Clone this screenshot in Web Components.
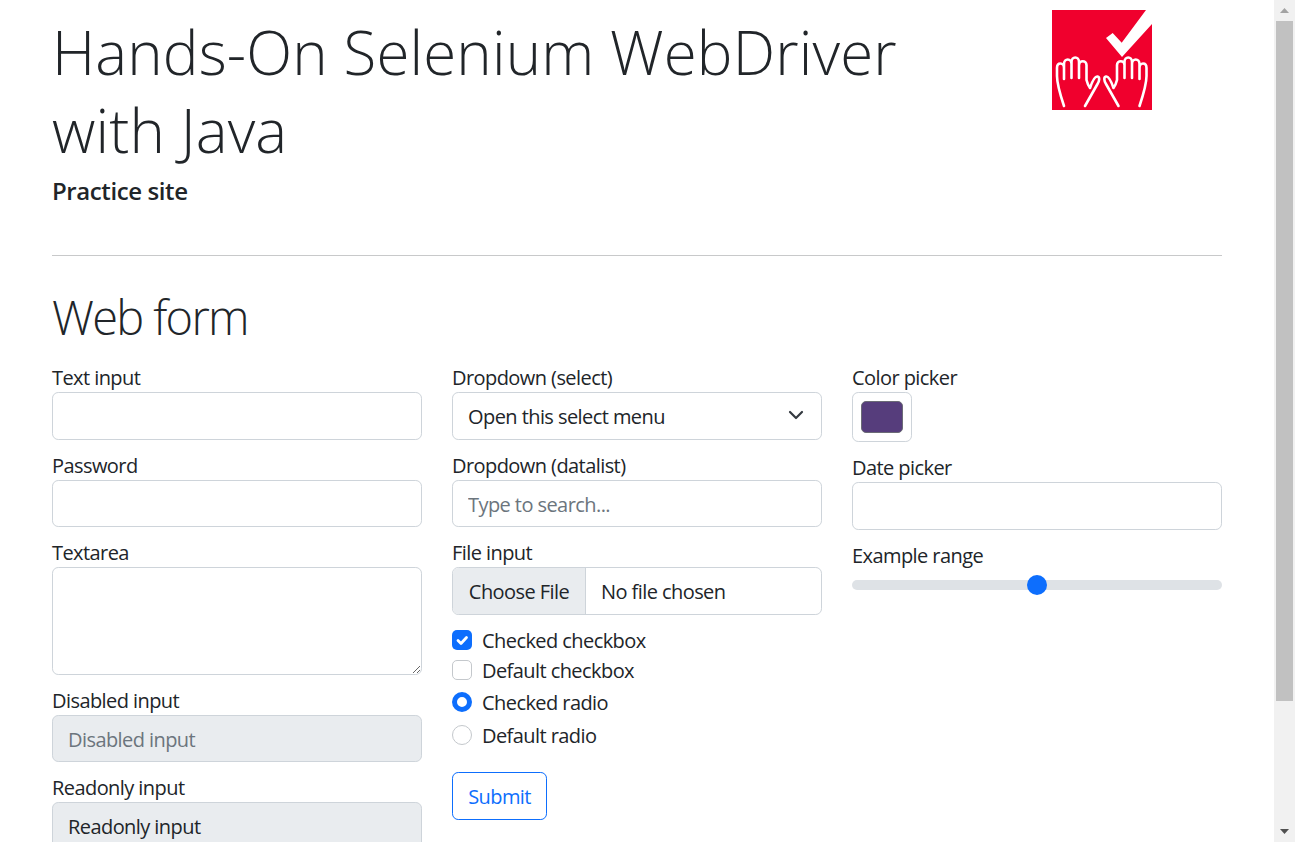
<!DOCTYPE html>
<html lang="en"><head><meta charset="utf-8"><title>Hands-On Selenium WebDriver with Java</title>
<style>
html,body{margin:0;height:100%;overflow:hidden;background:#fff}
body{font-family:"Open Sans","Noto Sans",sans-serif;color:#212529}
</style></head><body>
<app-shell>
  <site-header title-text="Hands-On Selenium WebDriver with Java" subtitle="Practice site"></site-header>
  <web-form></web-form>
</app-shell>
<script>
const FONT='"Open Sans","Noto Sans",sans-serif';
const LS='-.57px';
function def(name,html,cb){
  customElements.define(name,class extends HTMLElement{
    connectedCallback(){
      if(this.shadowRoot)return;
      const r=this.attachShadow({mode:'open'});
      r.innerHTML=typeof html==='function'?html(this):html;
      if(cb)cb(r,this);
    }
  });
}
const ctl=`box-sizing:border-box;display:block;width:100%;height:47.5px;border:1.25px solid #ced4da;border-radius:6.25px;padding:9.25px 15px 8.25px;font:20px/27.5px ${FONT};letter-spacing:${LS};color:#212529;background:#fff;outline:0;margin:0;`;

def('app-shell',`<style>
:host{display:flex;height:100vh;overflow:hidden}
main{flex:1;min-width:0;padding:0 52px;box-sizing:border-box}
</style><main><slot></slot></main><page-scrollbar></page-scrollbar>`);

def('page-scrollbar',`<style>
:host{display:flex;flex-direction:column;align-items:center;width:21px;flex:none;background:#f1f1f1;height:100vh}
.btn{height:21px;flex:none;display:flex;align-items:center;justify-content:center}
.track{flex:1;width:100%;box-sizing:border-box;padding:0 2px 0 2px}
.thumb{height:680px;background:#c1c1c1}
svg{display:block}
</style>
<div class="btn"><svg width="9" height="5" viewBox="0 0 9 5"><path d="M4.5 0 9 5H0z" fill="#a3a3a3"/></svg></div>
<div class="track"><div class="thumb"></div></div>
<div class="btn"><svg width="9" height="5" viewBox="0 0 9 5"><path d="M0 0h9L4.5 5z" fill="#505050"/></svg></div>`);

def('site-logo',`<style>:host{display:block;width:100px;height:100px}svg{display:block}</style>
<svg width="100" height="100" viewBox="0 0 100 100" role="img" aria-label="Logo">
<path d="M0 0H94L100 14V100H0z" fill="#f0002d"/>
<path d="M54 28 60.700 23 69.700 32.700 94 0H100V14L70 47z" fill="#fff"/>
<g id="h" fill="none" stroke="#fff" stroke-width="2.6" stroke-linecap="round" stroke-linejoin="round">
<path d="M12 96C8 84 5 75 5 66V58C5 52 12 52 12 58V69M12 58V54C12 48 19.500 48 19.500 54V68M19.500 54V52C19.500 46 27 46 27 52V68M27 55C27 50 34.500 50 34.500 55V70C35.500 74 36.500 76 38 78C40 72 43 66 45.500 66.500C48 67 47.500 71 45.500 74C41 82 37 89 33 96"/>
</g>
<use href="#h" transform="translate(99.500 0) scale(-1 1)"/>
</svg>`);

def('site-header',h=>`<style>
:host{display:block}
.row{display:flex;justify-content:space-between;align-items:flex-start;height:255px}
.text{width:880px;padding-top:13px}
h1{margin:0;font-size:60px;line-height:78px;font-weight:300;letter-spacing:.15px}
h2{margin:0;padding-top:7px;font-size:24px;line-height:30px;font-weight:600;letter-spacing:-.4px}
site-logo{margin:10px 70px 0 0}
hr{margin:0;border:0;height:1px;background:#c8c9ca}
</style><div class="row"><div class="text"><h1>${h.getAttribute('title-text')}</h1><h2>${h.getAttribute('subtitle')}</h2></div><site-logo></site-logo></div><hr>`);

def('form-field',h=>`<style>
:host{display:block;margin-bottom:10px}
label{display:block;height:30px;font:20px/31px ${FONT};letter-spacing:${LS};color:#212529}
</style><label>${h.getAttribute('label')}</label><slot></slot>`);

def('text-field',h=>{
  const ro=h.hasAttribute('readonly'),dis=h.hasAttribute('disabled');
  return `<style>:host{display:block}
  input{${ctl}padding-top:9.75px;padding-bottom:7.75px;${(ro||dis)?'background:#e9ecef;':''}}
  input::placeholder{color:#6c757d;opacity:1}
  </style><input type="text" ${dis?'disabled':''} ${ro?'readonly':''} ${h.getAttribute('placeholder')?`placeholder="${h.getAttribute('placeholder')}"`:''} ${h.getAttribute('value')?`value="${h.getAttribute('value')}"`:''} aria-label="${h.getAttribute('name')||'field'}">`;
});

def('area-field',`<style>:host{display:block}
textarea{${ctl}height:107.5px;resize:vertical}
</style><textarea aria-label="Textarea"></textarea>`);

def('select-field',`<style>:host{display:block;position:relative}
select{${ctl}appearance:none;-webkit-appearance:none;padding-right:45px}
svg{position:absolute;right:18px;top:17px;pointer-events:none}
</style><select aria-label="Dropdown"><option>Open this select menu</option></select>
<svg width="16" height="14" viewBox="0 0 16 14"><path d="M2 3l6 6 6-6" fill="none" stroke="#343a40" stroke-width="2.2" stroke-linecap="round" stroke-linejoin="round"/></svg>`);

def('file-field',`<style>:host{display:block}
.f{${ctl}display:flex;align-items:stretch;padding:0;overflow:hidden}
.b{background:#e9ecef;border-right:1.25px solid #ced4da;padding:2px 15px 0;display:flex;align-items:center;width:133px;box-sizing:border-box;justify-content:center}
.n{padding:2px 0 0 15px;display:flex;align-items:center}
</style><div class="f" role="button"><span class="b">Choose File</span><span class="n">No file chosen</span></div>`);

def('check-row',h=>{
  const radio=h.getAttribute('type')==='radio',on=h.hasAttribute('checked');
  return `<style>
  :host{display:flex;align-items:center;height:30px;font:20px/30px ${FONT};letter-spacing:${LS};color:#212529}
  input{appearance:none;-webkit-appearance:none;box-sizing:border-box;width:20px;height:20px;margin:0 10px 0 0;flex:none;border:1.25px solid #c4c8cc;background:#fff;border-radius:${radio?'50%':'5px'};display:block}
  input:checked{border:0;background:#0d6efd}
  input[type=radio]:checked{background:#fff;border:5px solid #0d6efd}
  .w{position:relative;display:flex}
  .t{padding-top:2px}
  svg{position:absolute;left:0;top:0;pointer-events:none}
  </style><span class="w"><input type="${radio?'radio':'checkbox'}" ${on?'checked':''} aria-label="${h.textContent.trim()}">${on&&!radio?'<svg width="20" height="20" viewBox="0 0 20 20"><path d="M6 10.5l3 3 5.500-6" fill="none" stroke="#fff" stroke-width="2.8" stroke-linecap="round" stroke-linejoin="round"/></svg>':''}</span><span class="t"><slot></slot></span>`;
});

def('submit-button',`<style>:host{display:block;width:95px}
button{display:block;box-sizing:border-box;height:47.5px;width:95px;padding:3px 0 0;border:1.25px solid #0d6efd;border-radius:6.25px;background:#fff;color:#0d6efd;font:20px/30px ${FONT};letter-spacing:${LS}}
</style><button type="submit"><slot></slot></button>`);

def('color-field',`<style>:host{display:block}
.o{box-sizing:border-box;width:60px;height:50px;border:1.25px solid #ced4da;border-radius:6.25px;padding:8px;display:flex}
.i{flex:1;background:#563d7c;border-radius:5px;border:1px solid #6b6b76}
</style><div class="o" role="button" aria-label="Color picker"><div class="i"></div></div>`);

def('range-field',`<style>:host{display:flex;align-items:center;height:30px}
.t{position:relative;flex:1;height:10px;background:#dee2e6;border-radius:5px}
.k{position:absolute;left:175px;top:-5px;width:20px;height:20px;border-radius:50%;background:#0d6efd}
</style><div class="t" role="slider" aria-valuenow="5" aria-valuemin="0" aria-valuemax="10"><div class="k"></div></div>`);

def('web-form',`<style>
:host{display:block}
h2{margin:0;padding-top:30.5px;font-size:47px;line-height:60px;font-weight:300;letter-spacing:-1.7px;height:75.5px;color:#212529}
.g{display:grid;grid-template-columns:repeat(3,370px);gap:30px;align-items:start}
.c{min-width:0}
.checks{margin-top:.5px}
.sub{margin-top:22.5px}
</style>
<h2>Web form</h2>
<form class="g" onsubmit="return false">
<div class="c">
<form-field label="Text input"><text-field name="Text input"></text-field></form-field>
<form-field label="Password"><text-field name="Password"></text-field></form-field>
<form-field label="Textarea"><area-field></area-field></form-field>
<form-field label="Disabled input"><text-field name="Disabled input" disabled placeholder="Disabled input"></text-field></form-field>
<form-field label="Readonly input"><text-field name="Readonly input" readonly value="Readonly input"></text-field></form-field>
</div>
<div class="c">
<form-field label="Dropdown (select)"><select-field></select-field></form-field>
<form-field label="Dropdown (datalist)"><text-field name="Dropdown (datalist)" placeholder="Type to search..."></text-field></form-field>
<form-field label="File input"><file-field></file-field></form-field>
<div class="checks">
<check-row checked>Checked checkbox</check-row>
<check-row style="margin-bottom:2px">Default checkbox</check-row>
<check-row type="radio" checked style="margin-bottom:3px">Checked radio</check-row>
<check-row type="radio">Default radio</check-row>
</div>
<div class="sub"><submit-button>Submit</submit-button></div>
</div>
<div class="c">
<form-field label="Color picker"><color-field></color-field></form-field>
<form-field label="Date picker"><text-field name="Date picker"></text-field></form-field>
<form-field label="Example range"><range-field></range-field></form-field>
</div>
</form>`);
</script>
</body></html>
